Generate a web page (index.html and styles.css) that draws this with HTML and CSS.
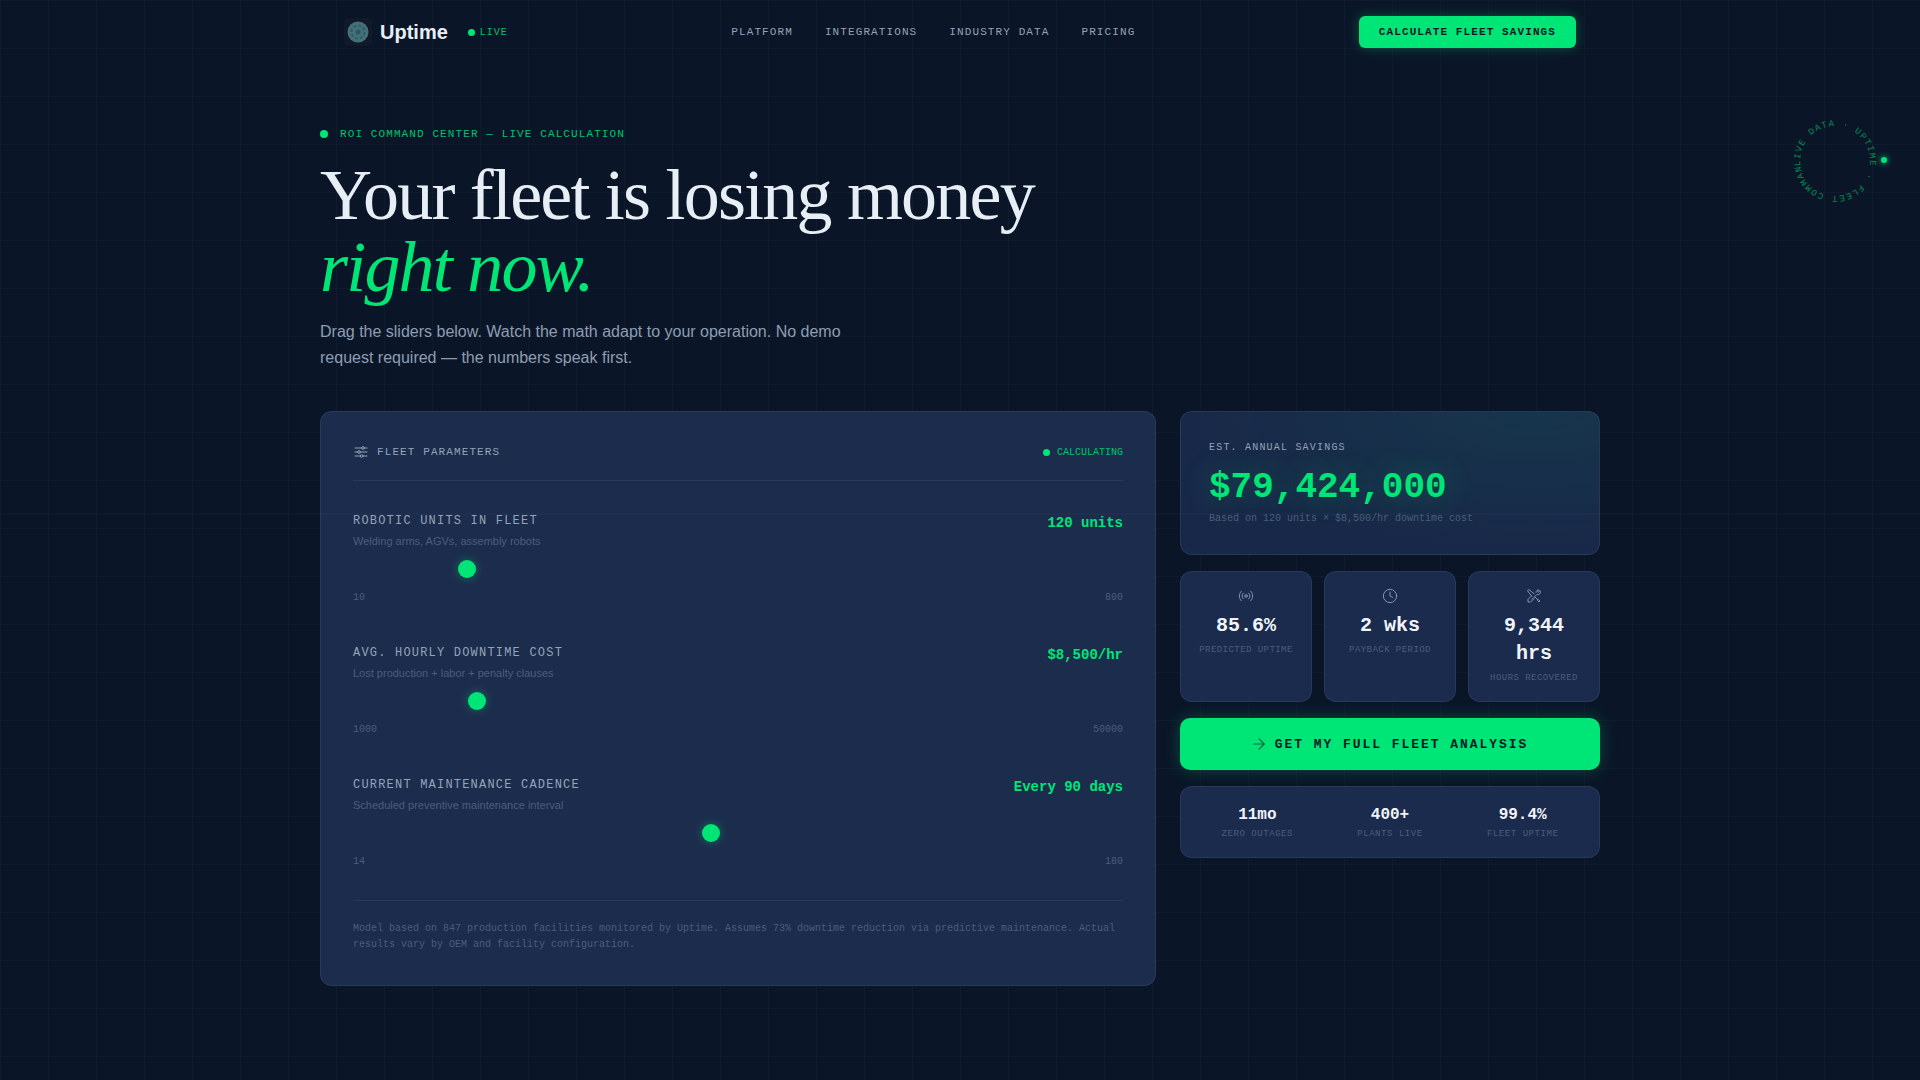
FILE: index.html
```html
<!DOCTYPE html>
<html lang="en">
<head>
    <meta charset="UTF-8">
    <meta name="viewport" content="width=device-width, initial-scale=1.0">
    <title>Uptime - ROI Command Center</title>
    <link rel="stylesheet" href="styles.css">
</head>
<body>
    <!-- Faint scan line across the page -->
    <div class="scanline"></div>

    <div class="ring">
        <svg class="ring-svg" width="100" height="100" viewBox="0 0 100 100">
            <defs>
                <path id="ringPath" d="M50 15a35 35 0 1 1 -0.01 0"></path>
            </defs>
            <g transform="rotate(-98 50 50)">
                <text class="ring-text"><textPath href="#ringPath">LIVE DATA · UPTIME · FLEET COMMAND ·</textPath></text>
            </g>
        </svg>
        <span class="ring-dot"></span>
    </div>

    <!-- Navigation -->
    <nav class="nav">
        <div class="brand">
            <span class="logo">
                <svg width="28" height="28" viewBox="0 0 28 28">
                    <rect width="28" height="28" fill="#101a2a"></rect>
                    <circle cx="14" cy="14" r="10.500" fill="#44707a"></circle>
                    <circle cx="14" cy="14" r="6.500" fill="none" stroke="#335a66" stroke-width="2" stroke-dasharray="3 2"></circle>
                    <circle cx="14" cy="14" r="2.500" fill="#2f5561"></circle>
                </svg>
            </span>
            <span class="brand-name">Uptime</span>
            <span class="live"><i class="dot dot-sm"></i>LIVE</span>
        </div>
        <div class="nav-links">
            <a href="#">PLATFORM</a>
            <a href="#">INTEGRATIONS</a>
            <a href="#">INDUSTRY DATA</a>
            <a href="#">PRICING</a>
        </div>
        <button class="nav-cta">CALCULATE FLEET SAVINGS</button>
    </nav>

    <main class="main">
        <!-- Hero -->
        <p class="eyebrow"><i class="dot"></i>ROI COMMAND CENTER — LIVE CALCULATION</p>
        <h1 class="title">Your fleet is losing money<br><em>right now.</em></h1>
        <p class="lead">Drag the sliders below. Watch the math adapt to your operation. No demo request required — the numbers speak first.</p>

        <div class="columns">
            <!-- Parameters panel -->
            <section class="panel">
                <div class="panel-head">
                    <span class="panel-title">
                        <svg width="16" height="16" viewBox="0 0 24 24" fill="none" stroke="#94a3b8" stroke-width="1.500" stroke-linecap="round">
                            <path d="M3 6h18M3 12h18M3 18h18"></path>
                            <circle cx="15" cy="6" r="2" fill="#1c2c4d"></circle>
                            <circle cx="9" cy="12" r="2" fill="#1c2c4d"></circle>
                            <circle cx="13" cy="18" r="2" fill="#1c2c4d"></circle>
                        </svg>
                        FLEET PARAMETERS
                    </span>
                    <span class="calc"><i class="dot dot-sm"></i>CALCULATING</span>
                </div>

                <div class="param">
                    <div class="param-top">
                        <div>
                            <div class="param-name">ROBOTIC UNITS IN FLEET</div>
                            <div class="param-desc">Welding arms, AGVs, assembly robots</div>
                        </div>
                        <div class="param-value">120 units</div>
                    </div>
                    <input class="slider" type="range" min="10" max="800" value="120">
                    <div class="param-range"><span>10</span><span>800</span></div>
                </div>

                <div class="param">
                    <div class="param-top">
                        <div>
                            <div class="param-name">AVG. HOURLY DOWNTIME COST</div>
                            <div class="param-desc">Lost production + labor + penalty clauses</div>
                        </div>
                        <div class="param-value">$8,500/hr</div>
                    </div>
                    <input class="slider" type="range" min="1000" max="50000" value="8500">
                    <div class="param-range"><span>1000</span><span>50000</span></div>
                </div>

                <div class="param">
                    <div class="param-top">
                        <div>
                            <div class="param-name">CURRENT MAINTENANCE CADENCE</div>
                            <div class="param-desc">Scheduled preventive maintenance interval</div>
                        </div>
                        <div class="param-value">Every 90 days</div>
                    </div>
                    <input class="slider" type="range" min="14" max="180" step="7" value="90">
                    <div class="param-range"><span>14</span><span>180</span></div>
                </div>

                <p class="panel-note">Model based on 847 production facilities monitored by Uptime. Assumes 73% downtime reduction via predictive maintenance. Actual results vary by OEM and facility configuration.</p>
            </section>

            <!-- Results -->
            <aside class="results">
                <div class="savings">
                    <div class="savings-label">EST. ANNUAL SAVINGS</div>
                    <div class="savings-value">$79,424,000</div>
                    <div class="savings-note">Based on 120 units × $8,500/hr downtime cost</div>
                </div>

                <div class="stats">
                    <div class="stat">
                        <svg class="stat-icon" width="16" height="16" viewBox="0 0 24 24" fill="none" stroke="#8494ad" stroke-width="1.500" stroke-linecap="round" stroke-linejoin="round">
                            <path d="M4.900 19.100C1 15.200 1 8.800 4.900 4.900"></path>
                            <path d="M7.800 16.200c-2.300-2.300-2.300-6.100 0-8.500"></path>
                            <circle cx="12" cy="12" r="2"></circle>
                            <path d="M16.200 7.800c2.300 2.300 2.300 6.100 0 8.500"></path>
                            <path d="M19.100 4.900C23 8.800 23 15.100 19.100 19"></path>
                        </svg>
                        <div class="stat-value">85.6%</div>
                        <div class="stat-label">PREDICTED UPTIME</div>
                    </div>
                    <div class="stat">
                        <svg class="stat-icon" width="16" height="16" viewBox="0 0 24 24" fill="none" stroke="#8494ad" stroke-width="1.500" stroke-linecap="round" stroke-linejoin="round">
                            <circle cx="12" cy="12" r="10"></circle>
                            <path d="M12 6v6l4 2"></path>
                        </svg>
                        <div class="stat-value">2 wks</div>
                        <div class="stat-label">PAYBACK PERIOD</div>
                    </div>
                    <div class="stat">
                        <svg class="stat-icon" width="16" height="16" viewBox="0 0 24 24" fill="none" stroke="#8494ad" stroke-width="1.500" stroke-linecap="round" stroke-linejoin="round">
                            <path d="m12.300 8.700-7.600-6a1.500 1.500 0 0 0-2 2l6 7.600"></path>
                            <path d="m8 12-5 5v4h4l5-5"></path>
                            <path d="M15 6.500a3.500 3.500 0 0 1 4.800-3.300l-2.300 2.300 1 1 2.300-2.300A3.500 3.500 0 0 1 16.500 9.500L9 17"></path>
                            <path d="m14 14 3 3 .5 2 2 2 1.500-1.500-2-2-2-.5-3-3"></path>
                        </svg>
                        <div class="stat-value">9,344 hrs</div>
                        <div class="stat-label">HOURS RECOVERED</div>
                    </div>
                </div>

                <button class="analysis-btn">
                    <svg width="18" height="18" viewBox="0 0 24 24" fill="none" stroke="#0a6b3a" stroke-width="1.500" stroke-linecap="round" stroke-linejoin="round">
                        <path d="M5 12h14M12 5l7 7-7 7"></path>
                    </svg>
                    GET MY FULL FLEET ANALYSIS
                </button>

                <div class="proof">
                    <div class="proof-item">
                        <div class="proof-value">11mo</div>
                        <div class="proof-label">ZERO OUTAGES</div>
                    </div>
                    <div class="proof-item">
                        <div class="proof-value">400+</div>
                        <div class="proof-label">PLANTS LIVE</div>
                    </div>
                    <div class="proof-item">
                        <div class="proof-value">99.4%</div>
                        <div class="proof-label">FLEET UPTIME</div>
                    </div>
                </div>
            </aside>
        </div>
    </main>
</body>
</html>
```

FILE: styles.css
```css
/* General body styling */
* {
    box-sizing: border-box;
}

body {
    margin: 0;
    min-height: 1080px;
    position: relative;
    overflow: hidden;
    background-color: #0a1628;
    background-image:
        linear-gradient(rgba(148, 163, 184, 0.035) 1px, transparent 1px),
        linear-gradient(90deg, rgba(148, 163, 184, 0.035) 1px, transparent 1px);
    background-size: 48px 48px;
    font-family: "Liberation Sans", Arial, sans-serif;
    color: #e2e8f0;
}

.dot {
    display: inline-block;
    width: 8px;
    height: 8px;
    border-radius: 50%;
    background: #00e676;
    flex-shrink: 0;
}

.dot-sm {
    width: 7px;
    height: 7px;
}

/* Scan line sits over everything */
.scanline {
    position: absolute;
    top: 513px;
    left: 0;
    width: 100%;
    height: 2px;
    background: rgba(148, 163, 184, 0.03);
    pointer-events: none;
}

.ring {
    position: absolute;
    top: 111px;
    left: 1785px;
    width: 100px;
    height: 100px;
}

.ring-svg {
    overflow: visible;
}

.ring-text {
    font-family: "Liberation Mono", monospace;
    font-size: 9px;
    letter-spacing: 1.27px;
    fill: rgba(0, 230, 118, 0.55);
}

.ring-dot {
    position: absolute;
    top: 46px;
    left: 96px;
    width: 6px;
    height: 6px;
    border-radius: 50%;
    background: #00e676;
    box-shadow: 0 0 6px #00e676;
}

/* Navigation */
.nav {
    width: 1280px;
    height: 64px;
    margin: 0 auto;
    padding: 0 24px;
    display: flex;
    justify-content: space-between;
    align-items: center;
}

.brand {
    display: flex;
    align-items: center;
}

.logo {
    display: flex;
    width: 28px;
    height: 28px;
    border-radius: 4px;
    overflow: hidden;
}

.brand-name {
    margin-left: 8px;
    font-size: 20px;
    font-weight: 700;
    color: #e8eef6;
}

.live {
    display: flex;
    align-items: center;
    gap: 5px;
    margin-left: 20px;
    font-family: "Liberation Mono", monospace;
    font-size: 10px;
    letter-spacing: 1px;
    color: #00c468;
}

.nav-links {
    display: flex;
    gap: 32px;
}

.nav-links a {
    font-family: "Liberation Mono", monospace;
    font-size: 11px;
    letter-spacing: 1.1px;
    color: #94a3b8;
    text-decoration: none;
}

.nav-cta {
    height: 32px;
    padding: 0 20px;
    border: none;
    border-radius: 6px;
    background: #00e676;
    box-shadow: 0 0 12px rgba(0, 230, 118, 0.3);
    font-family: "Liberation Mono", monospace;
    font-size: 11px;
    font-weight: 700;
    letter-spacing: 1.1px;
    color: #0a1628;
    cursor: pointer;
}

/* Hero */
.main {
    width: 1280px;
    margin: 0 auto;
    padding-top: 64px;
}

.eyebrow {
    display: flex;
    align-items: center;
    gap: 12px;
    margin: 0;
    height: 12px;
    font-family: "Liberation Mono", monospace;
    font-size: 11px;
    letter-spacing: 1.1px;
    color: #00c468;
}

.title {
    margin: 19px 0 0;
    font-family: "Liberation Serif", serif;
    font-size: 72px;
    font-weight: 400;
    line-height: 72px;
    letter-spacing: -1.8px;
    color: #e8eef6;
}

.title em {
    color: #00e676;
}

.lead {
    width: 560px;
    margin: 16px 0 0;
    font-size: 16px;
    line-height: 26px;
    color: #8f9db2;
}

/* Columns */
.columns {
    display: grid;
    grid-template-columns: 836px 420px;
    gap: 24px;
    align-items: start;
    margin-top: 40px;
}

.panel {
    height: 575px;
    padding: 32px;
    background: #1c2c4d;
    border: 1px solid rgba(148, 163, 184, 0.12);
    border-radius: 12px;
}

.panel-head {
    display: flex;
    justify-content: space-between;
    align-items: center;
    height: 37px;
    padding-bottom: 20px;
    margin-bottom: 33px;
    border-bottom: 1px solid rgba(148, 163, 184, 0.12);
}

.panel-title {
    display: flex;
    align-items: center;
    gap: 8px;
    font-family: "Liberation Mono", monospace;
    font-size: 11px;
    letter-spacing: 1.1px;
    color: #94a3b8;
}

.calc {
    display: flex;
    align-items: center;
    gap: 7px;
    font-family: "Liberation Mono", monospace;
    font-size: 10px;
    color: #00c468;
}

.param + .param {
    margin-top: 42px;
}

.param-top {
    display: flex;
    justify-content: space-between;
    align-items: flex-start;
}

.param-name {
    font-family: "Liberation Mono", monospace;
    font-size: 12px;
    letter-spacing: 1.2px;
    line-height: 14px;
    color: #94a3b8;
}

.param-desc {
    margin-top: 6px;
    font-size: 11px;
    line-height: 14px;
    color: #4a5e7a;
}

.param-value {
    margin-top: 1px;
    font-family: "Liberation Mono", monospace;
    font-size: 14px;
    font-weight: 700;
    color: #00e676;
}

/* Only the thumb shows, the track is nearly invisible */
.slider {
    display: block;
    width: 100%;
    height: 18px;
    margin: 12px 0 0;
    background: transparent;
    appearance: none;
    -webkit-appearance: none;
}

.slider::-webkit-slider-thumb {
    -webkit-appearance: none;
    width: 18px;
    height: 18px;
    border-radius: 50%;
    background: #00e676;
    box-shadow: 0 0 10px rgba(0, 230, 118, 0.4);
}

.param-range {
    display: flex;
    justify-content: space-between;
    margin-top: 14px;
    font-family: "Liberation Mono", monospace;
    font-size: 10px;
    line-height: 12px;
    color: #4a5e7a;
}

.panel-note {
    margin: 32px 0 0;
    padding-top: 20px;
    border-top: 1px solid rgba(148, 163, 184, 0.12);
    font-family: "Liberation Mono", monospace;
    font-size: 10px;
    line-height: 16px;
    color: #4a5e7a;
}

/* Results */
.results {
    display: flex;
    flex-direction: column;
    gap: 16px;
}

.savings {
    height: 144px;
    padding: 30px 28px 0;
    background:
        radial-gradient(ellipse at 85% 0%, rgba(0, 230, 118, 0.07), transparent 70%),
        #182848;
    border: 1px solid rgba(148, 163, 184, 0.12);
    border-radius: 12px;
}

.savings-label {
    font-family: "Liberation Mono", monospace;
    font-size: 10px;
    letter-spacing: 1.2px;
    line-height: 12px;
    color: #94a3b8;
}

.savings-value {
    margin-top: 14px;
    font-family: "Liberation Mono", monospace;
    font-size: 36px;
    font-weight: 700;
    line-height: 40px;
    color: #00e676;
    text-shadow: 0 0 30px rgba(0, 230, 118, 0.3);
}

.savings-note {
    margin-top: 5px;
    font-family: "Liberation Mono", monospace;
    font-size: 10px;
    line-height: 12px;
    color: #4a5e7a;
}

.stats {
    display: grid;
    grid-template-columns: repeat(3, 1fr);
    gap: 12px;
}

.stat {
    padding: 16px 12px;
    height: 131px;
    text-align: center;
    background: #1a2b4e;
    border: 1px solid rgba(148, 163, 184, 0.12);
    border-radius: 12px;
}

.stat-icon {
    display: block;
    margin: 0 auto;
}

.stat-value {
    margin-top: 8px;
    font-family: "Liberation Mono", monospace;
    font-size: 20px;
    font-weight: 700;
    line-height: 28px;
    color: #f1f5f9;
}

.stat-label {
    margin-top: 4px;
    font-family: "Liberation Mono", monospace;
    font-size: 9px;
    letter-spacing: 0.45px;
    line-height: 12px;
    color: #4a5e7a;
}

.analysis-btn {
    display: flex;
    align-items: center;
    justify-content: center;
    gap: 7px;
    height: 52px;
    padding: 0 2px 0 0;
    border: none;
    border-radius: 10px;
    background: #00e676;
    box-shadow: 0 0 16px rgba(0, 230, 118, 0.25);
    font-family: "Liberation Mono", monospace;
    font-size: 13px;
    font-weight: 700;
    letter-spacing: 1.95px;
    color: #0a1628;
    cursor: pointer;
}

.proof {
    display: grid;
    grid-template-columns: repeat(3, 1fr);
    height: 72px;
    padding: 18px 10px 0;
    background: #1a2b4e;
    border: 1px solid rgba(148, 163, 184, 0.12);
    border-radius: 12px;
    text-align: center;
}

.proof-value {
    font-family: "Liberation Mono", monospace;
    font-size: 16px;
    font-weight: 700;
    line-height: 20px;
    color: #f1f5f9;
}

.proof-label {
    margin-top: 3px;
    font-family: "Liberation Mono", monospace;
    font-size: 9px;
    letter-spacing: 0.55px;
    line-height: 12px;
    color: #4a5e7a;
}
```
